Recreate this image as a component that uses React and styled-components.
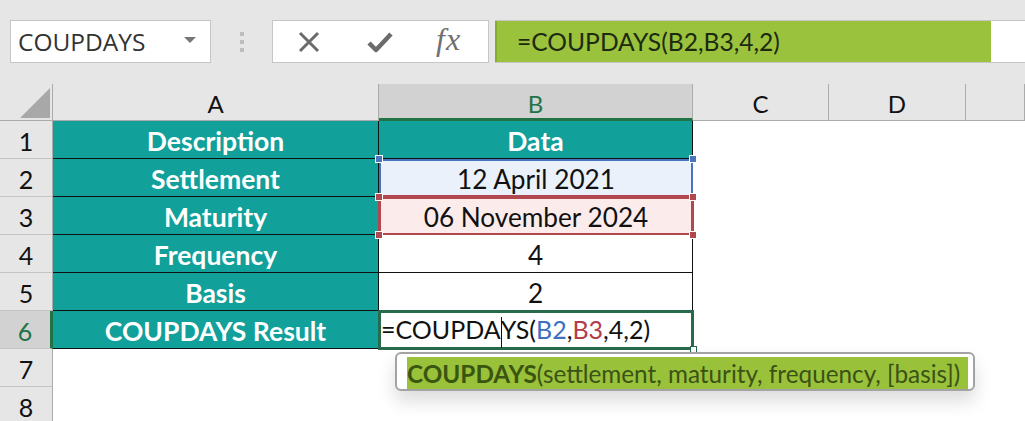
import React from "react";
import styled, { createGlobalStyle, css } from "styled-components";

// global styles
const GlobalStyle = createGlobalStyle`
  body {
    margin: 0;
    background: #ffffff;
    overflow: hidden;
    font-family: Lato, "Liberation Sans", sans-serif;
  }
`;

const calibri = `Lato, "Liberation Sans", sans-serif`;
const teal = "#11a09a";
const excelGreen = "#217346";
const headerGrey = "#e6e6e6";
const lineGrey = "#ababab";

// toolbar
const Toolbar = styled.div`
  height: 84px;
  box-sizing: border-box;
  background: ${headerGrey};
  padding: 20px 0 0 10px;
  display: flex;
  align-items: flex-start;
`;

const NameBox = styled.div`
  width: 201px;
  height: 43px;
  box-sizing: border-box;
  background: #fff;
  border: 1px solid #c6c6c6;
  display: flex;
  align-items: center;
  justify-content: space-between;
  padding: 0 14px 0 7px;
  font-family: "Open Sans", "Noto Sans", sans-serif;
  font-size: 24.5px;
  color: #333;
`;

const Caret = styled.span`
  width: 0;
  height: 0;
  border-left: 6px solid transparent;
  border-right: 6px solid transparent;
  border-top: 6px solid #777;
  margin-top: -4px;
`;

const Grip = styled.div`
  width: 61px;
  height: 43px;
  display: flex;
  flex-direction: column;
  align-items: center;
  justify-content: center;
  gap: 4px;
  span {
    width: 4px;
    height: 4px;
    background: #bdbdbd;
  }
`;

const FxBox = styled.div`
  width: 217px;
  height: 43px;
  box-sizing: border-box;
  background: #fff;
  border: 1px solid #c6c6c6;
  display: flex;
  align-items: center;
  padding-left: 24px;
  gap: 46px;
  color: #6b6b6b;
`;

const FxText = styled.span`
  font-family: "Liberation Serif", "DejaVu Serif", serif;
  font-style: italic;
  font-size: 32px;
  color: #707070;
  margin-left: -3px;
  margin-top: -4px;
  letter-spacing: 1px;
`;

const FormulaBar = styled.div`
  flex: 1;
  margin-left: 6px;
  height: 43px;
  box-sizing: border-box;
  background: #fff;
  border-top: 1px solid #c6c6c6;
  border-bottom: 1px solid #c6c6c6;
  display: flex;
`;

const FormulaFill = styled.div`
  width: 496px;
  background: #9bc23c;
  border-left: 2px solid #86ab2e;
  box-sizing: border-box;
  display: flex;
  align-items: center;
  padding-left: 20px;
  font-family: ${calibri};
  font-size: 24.6px;
  color: #1c2a12;
`;

// sheet
const SheetWrap = styled.div`
  position: relative;
`;

const Sheet = styled.div`
  display: grid;
  grid-template-columns: 53px 326px 314px 136px 137px 1fr;
  grid-template-rows: 37px repeat(8, 38px);
  font-family: ${calibri};
`;

const Corner = styled.div`
  background: ${headerGrey};
  border-right: 1px solid ${lineGrey};
  border-bottom: 1px solid ${lineGrey};
  position: relative;
  &::after {
    content: "";
    position: absolute;
    left: 20px;
    top: 4px;
    width: 30px;
    height: 30px;
    background: #a8a8a8;
    clip-path: polygon(100% 0, 100% 100%, 0 100%);
  }
`;

const ColHeader = styled.div`
  background: ${(p) => (p.$active ? "#d2d2d2" : headerGrey)};
  color: ${(p) => (p.$active ? excelGreen : "#111")};
  border-right: 1px solid ${lineGrey};
  border-bottom: ${(p) => (p.$active ? `3px solid ${excelGreen}` : `1px solid ${lineGrey}`)};
  box-sizing: border-box;
  display: flex;
  align-items: center;
  justify-content: center;
  font-size: 24px;
  padding-top: ${(p) => (p.$active ? "4px" : "2px")};
`;

const RowHeader = styled.div`
  background: ${(p) => (p.$active ? "#d2d2d2" : headerGrey)};
  color: ${(p) => (p.$active ? excelGreen : "#111")};
  border-right: ${(p) => (p.$active ? `3px solid ${excelGreen}` : `1px solid ${lineGrey}`)};
  border-bottom: 1px solid #c4c4c4;
  box-sizing: border-box;
  display: flex;
  align-items: center;
  justify-content: center;
  font-size: 25px;
  padding-top: 2px;
`;

const Cell = styled.div`
  box-sizing: border-box;
  position: relative;
  display: flex;
  align-items: center;
  justify-content: center;
  padding-top: 2px;
  font-size: 26.2px;
  color: #111;
  white-space: nowrap;
  ${(p) =>
    p.$boxed &&
    css`
      border-right: 1px solid #111;
      border-bottom: 1px solid #111;
    `}
  ${(p) =>
    p.$head &&
    css`
      background: ${teal};
      color: #fff;
      font-weight: 700;
      font-size: 26.5px;
    `}
  ${(p) =>
    p.$ref === "blue" &&
    css`
      background: #eaf1fb;
      box-shadow: inset 0 0 0 2px #4a74bd;
      border: none;
    `}
  ${(p) =>
    p.$ref === "red" &&
    css`
      background: #fcebeb;
      box-shadow: inset 0 0 0 2px #b1474f, 0 -1px 0 1px #b1474f;
      border: none;
    `}
  ${(p) =>
    p.$selected &&
    css`
      justify-content: flex-start;
      padding-left: 2px;
      font-size: 25px;
      box-shadow: inset 0 0 0 2px #2a6a4c, 0 0 0 1px #2a6a4c;
      z-index: 2;
    `}
`;

const Handle = styled.span`
  position: absolute;
  width: 6px;
  height: 6px;
  background: ${(p) => p.$color};
  border: 1px solid #fff;
  z-index: 3;
  ${(p) => (p.$top ? "top: -4px;" : "bottom: -4px;")}
  ${(p) => (p.$left ? "left: -4px;" : "right: -4px;")}
`;

const Ref = styled.span`
  color: ${(p) => p.$color};
`;

const Cursor = styled.span`
  display: inline-block;
  width: 1px;
  height: 31px;
  background: #111;
  vertical-align: middle;
  margin: 0 -1px 0 0;
`;

const FillHandle = styled.span`
  position: absolute;
  right: -4px;
  bottom: -4px;
  width: 5px;
  height: 5px;
  background: #fff;
  border: 1px solid #2a6a4c;
`;

const Tooltip = styled.div`
  position: absolute;
  left: 395px;
  top: 268px;
  width: 580px;
  height: 39px;
  box-sizing: border-box;
  background: #fff;
  border: 2px solid #a3a3a3;
  border-radius: 6px;
  padding: 3px 5px 0 10px;
  display: flex;
  box-shadow: 0 10px 18px rgba(0, 0, 0, 0.14);
  z-index: 4;
`;

const TipFill = styled.div`
  flex: 1;
  background: #99c13a;
  display: flex;
  align-items: center;
  font-family: ${calibri};
  font-size: 24.3px;
  color: #3b5216;
  white-space: nowrap;
  b {
    font-weight: 700;
    color: #3a5510;
  }
`;

const XIcon = () => (
  <svg width="24" height="24" viewBox="0 0 24 24">
    <path d="M3 3 L21 21 M21 3 L3 21" stroke="#6b6b6b" strokeWidth="3" fill="none" />
  </svg>
);

const CheckIcon = () => (
  <svg width="26" height="22" viewBox="0 0 26 22">
    <path d="M2 12 L9 19 L24 3" stroke="#6b6b6b" strokeWidth="4.5" fill="none" strokeLinejoin="round" />
  </svg>
);

const rows = [
  ["Description", "Data"],
  ["Settlement", "12 April 2021"],
  ["Maturity", "06 November 2024"],
  ["Frequency", "4"],
  ["Basis", "2"],
  ["COUPDAYS Result", null],
];

const App = () => {
  return (
    <>
      <GlobalStyle />
      <Toolbar>
        <NameBox>
          COUPDAYS
          <Caret />
        </NameBox>
        <Grip>
          <span />
          <span />
          <span />
        </Grip>
        <FxBox>
          <XIcon />
          <CheckIcon />
          <FxText>fx</FxText>
        </FxBox>
        <FormulaBar>
          <FormulaFill>=COUPDAYS(B2,B3,4,2)</FormulaFill>
        </FormulaBar>
      </Toolbar>
      <SheetWrap>
        <Sheet>
          <Corner />
          <ColHeader>A</ColHeader>
          <ColHeader $active>B</ColHeader>
          <ColHeader>C</ColHeader>
          <ColHeader>D</ColHeader>
          <ColHeader />
          {rows.map(([label, value], i) => (
            <React.Fragment key={label}>
              <RowHeader $active={i === 5}>{i + 1}</RowHeader>
              <Cell $boxed $head>
                {label}
              </Cell>
              {i === 0 && (
                <Cell $boxed $head>
                  {value}
                </Cell>
              )}
              {i === 1 && (
                <Cell $ref="blue">
                  <Handle $top $left $color="#4a74bd" />
                  <Handle $top $color="#4a74bd" />
                  {value}
                </Cell>
              )}
              {i === 2 && (
                <Cell $ref="red">
                  <Handle $top $left $color="#b1474f" />
                  <Handle $top $color="#b1474f" />
                  <Handle $left $color="#b1474f" />
                  <Handle $color="#b1474f" />
                  {value}
                </Cell>
              )}
              {(i === 3 || i === 4) && <Cell $boxed>{value}</Cell>}
              {i === 5 && (
                <Cell $selected>
                  <span>
                    =COUPDA
                    <Cursor />
                    YS(<Ref $color="#3f6fbf">B2</Ref>,<Ref $color="#b13e48">B3</Ref>,4,2)
                  </span>
                  <FillHandle />
                </Cell>
              )}
              <Cell />
              <Cell />
              <Cell />
            </React.Fragment>
          ))}
          {[7, 8].map((n) => (
            <React.Fragment key={n}>
              <RowHeader>{n}</RowHeader>
              <Cell />
              <Cell />
              <Cell />
              <Cell />
              <Cell />
            </React.Fragment>
          ))}
        </Sheet>
        <Tooltip>
          <TipFill>
            <b>COUPDAYS</b>(settlement, maturity, frequency, [basis])
          </TipFill>
        </Tooltip>
      </SheetWrap>
    </>
  );
};

export default App;
